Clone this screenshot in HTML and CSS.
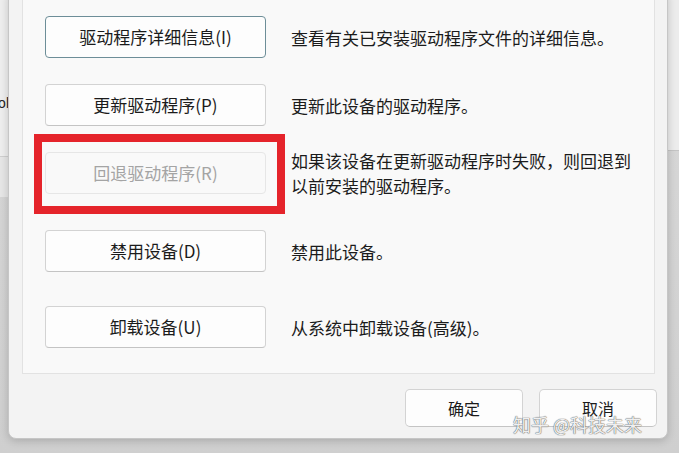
FILE: index.html
```html
<!DOCTYPE html>
<html lang="zh-CN">
<head>
<meta charset="utf-8">
<title>驱动程序</title>
<link rel="stylesheet" href="styles.css">
</head>
<body>
<div class="backwin backwin-left"><span class="backwin-text">Tool</span></div>
<div class="backwin backwin-left-low"></div>
<div class="backwin backwin-right"></div>
<div class="dialog">
  <div class="panel">
    <div class="row">
      <div class="btn-wrap"><button class="btn btn-focus">驱动程序详细信息(I)</button></div>
      <p class="desc">查看有关已安装驱动程序文件的详细信息。</p>
    </div>
    <div class="row">
      <div class="btn-wrap"><button class="btn">更新驱动程序(P)</button></div>
      <p class="desc">更新此设备的驱动程序。</p>
    </div>
    <div class="row">
      <div class="btn-wrap">
        <button class="btn btn-disabled" disabled>回退驱动程序(R)</button>
        <span class="highlight"></span>
      </div>
      <p class="desc">如果该设备在更新驱动程序时失败，则回退到<br>以前安装的驱动程序。</p>
    </div>
    <div class="row row-tall">
      <div class="btn-wrap"><button class="btn">禁用设备(D)</button></div>
      <p class="desc">禁用此设备。</p>
    </div>
    <div class="row row-short">
      <div class="btn-wrap"><button class="btn">卸载设备(U)</button></div>
      <p class="desc">从系统中卸载设备(高级)。</p>
    </div>
  </div>
  <div class="footer">
    <button class="btn btn-foot">确定</button>
    <button class="btn btn-foot">取消</button>
  </div>
  <div class="watermark">知乎 @科技未来</div>
</div>
</body>
</html>
```
FILE: styles.css
```css
html, body {
  margin: 0;
  padding: 0;
}
body {
  width: 679px;
  height: 453px;
  overflow: hidden;
  position: relative;
  background: linear-gradient(#d9d9d9, #cfcfcf);
  font-family: "Noto Sans CJK SC", "Noto Sans", sans-serif;
  color: #1b1b1b;
}
.backwin {
  position: absolute;
}
.backwin-left {
  left: 0;
  top: 0;
  width: 12px;
  height: 156px;
  background: #eeeeee;
  border-bottom: 1px solid #cfcfcf;
}
.backwin-left-low {
  left: 0;
  top: 157px;
  width: 12px;
  height: 40px;
  background: #e6e6e6;
}
.backwin-text {
  position: absolute;
  right: 3px;
  top: 95px;
  font-family: "Liberation Sans", sans-serif;
  font-size: 14px;
  color: #222;
}
.backwin-right {
  right: 0;
  top: 0;
  width: 14px;
  height: 150px;
  background: #ececec;
  border-bottom: 1px solid #c4c4c4;
}
.dialog {
  position: absolute;
  left: 8px;
  top: -10px;
  width: 658px;
  height: 447px;
  border: 1px solid #c6c6c6;
  border-radius: 8px;
  background: #f3f3f3;
  box-shadow: 0 2px 8px rgba(0, 0, 0, 0.18);
  display: flex;
  flex-direction: column;
}
.panel {
  margin: 0 12px 0 13px;
  height: 370px;
  padding: 12px 0 0 22px;
  background: #f9f9f9;
  border: 1px solid #e2e2e2;
  border-top: none;
  display: grid;
  grid-template-rows: 68px 68px 68px 88px 64px;
  align-content: start;
}
.row {
  display: grid;
  grid-template-columns: 221px 1fr;
  column-gap: 25px;
  align-items: center;
}
.btn-wrap {
  position: relative;
  height: 42px;
}
.btn {
  width: 100%;
  height: 42px;
  padding: 0;
  margin: 0;
  background: #fdfdfd;
  border: 1px solid #d3d3d3;
  border-bottom-color: #c4c4c4;
  border-radius: 4px;
  font-family: "Noto Sans CJK SC", "Noto Sans", sans-serif;
  font-size: 17px;
  color: #1b1b1b;
  text-align: center;
  line-height: 40px;
}
.btn-focus {
  border: 1px solid #6d8e98;
}
.btn-disabled {
  background: #f9f9f9;
  border-color: #e6e6e6;
  color: #a4a4a4;
}
.highlight {
  position: absolute;
  left: -11px;
  top: -18px;
  right: -19px;
  bottom: -20px;
  border: 8px solid #e5242b;
  pointer-events: none;
}
.desc {
  margin: 0;
  font-size: 17px;
  line-height: 25px;
  color: #1b1b1b;
}
.footer {
  flex: 1;
  display: flex;
  justify-content: flex-end;
  align-items: flex-start;
  gap: 16px;
  padding: 15px 10px 0 0;
}
.btn-foot {
  width: 118px;
  height: 38px;
  line-height: 36px;
  font-size: 16px;
  border-radius: 5px;
}
.watermark {
  position: absolute;
  left: 504px;
  top: 422px;
  font-size: 18px;
  line-height: 22px;
  color: rgba(255, 255, 255, 0.92);
  text-shadow: 0 0 1px #5a5a5a, 0 0 1px #5a5a5a;
  white-space: nowrap;
}
```
